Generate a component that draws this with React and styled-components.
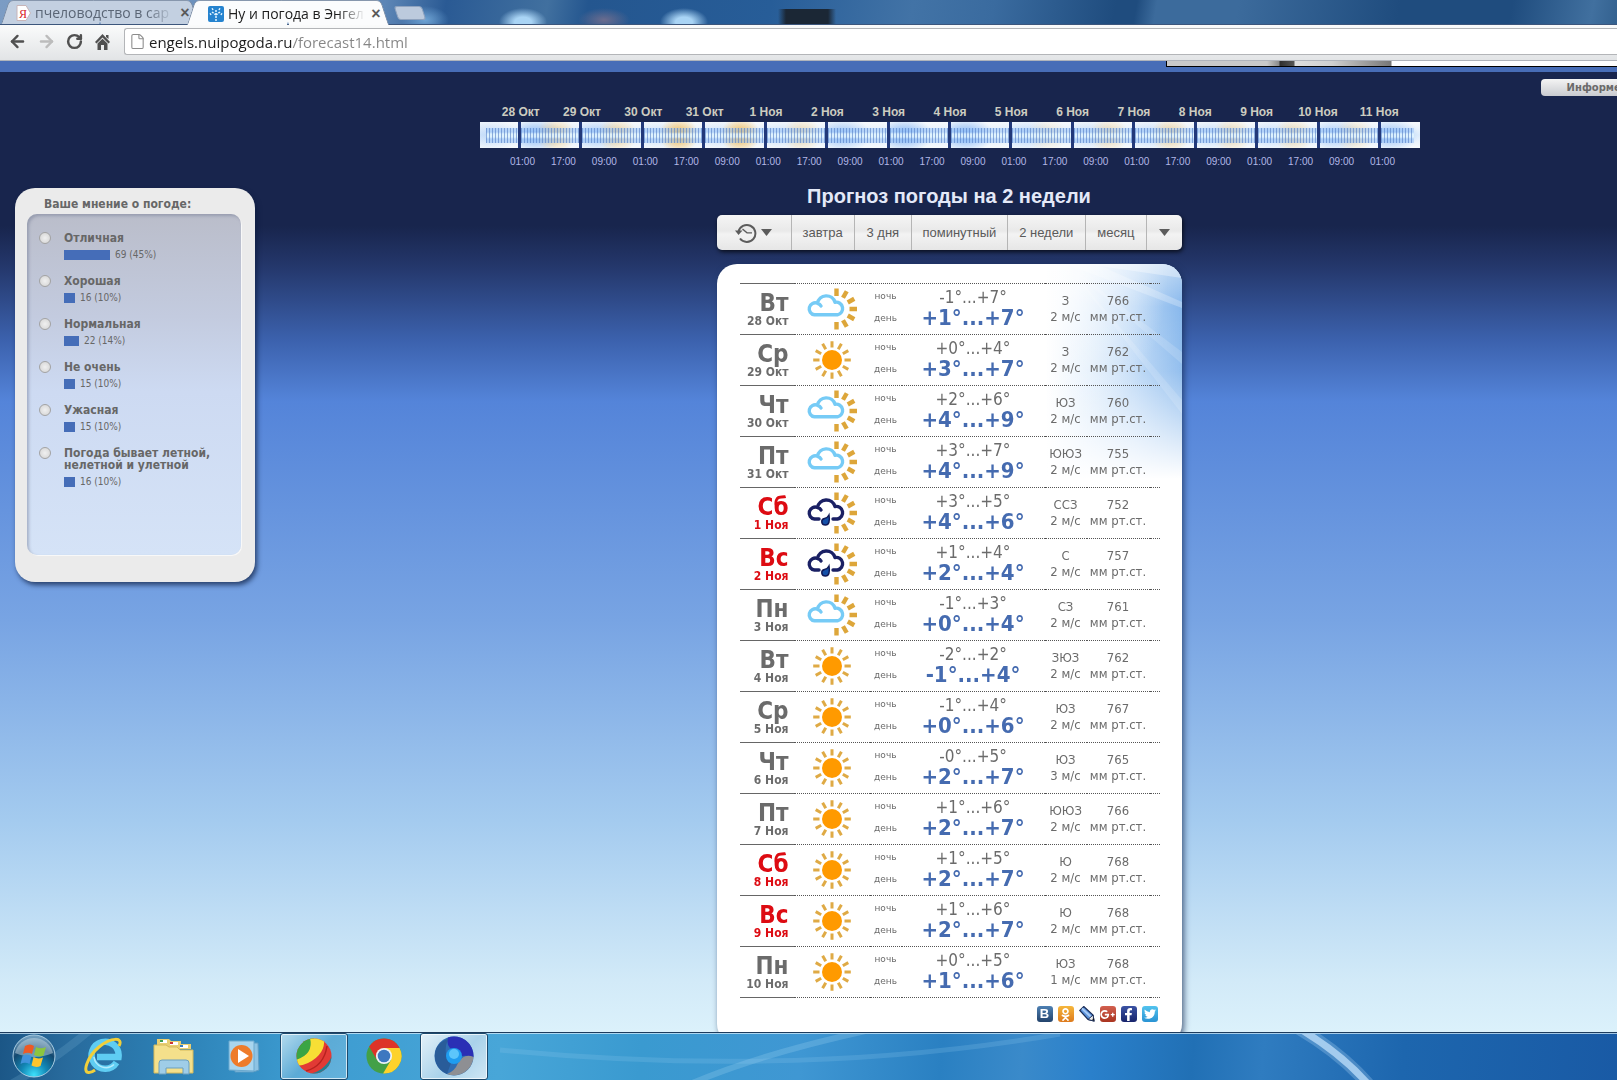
import styled, { createGlobalStyle, css } from "styled-components";
import { FaOdnoklassniki, FaGooglePlusG, FaFacebookF, FaTwitter } from "react-icons/fa";
import { ArrowLeft, ArrowRight, RotateCw, File } from "lucide-react";

const tahoma = `"DejaVu Sans Condensed", "DejaVu Sans", sans-serif`;
const arial = `"Liberation Sans", Arial, sans-serif`;
const segoe = `"Open Sans", "Noto Sans", sans-serif`;

const GlobalStyle = createGlobalStyle`
  * { box-sizing: border-box; }
  body {
    margin: 0;
    overflow: hidden;
    font-family: ${tahoma};
  }
  button, input { font: inherit; }
  svg { display: block; }
`

const Screen = styled.div`
  height: 100vh;
  display: flex;
  flex-direction: column;
`

/* ---------- browser ---------- */

const TabBar = styled.div`
  height: 25px;
  flex-shrink: 0;
  display: flex;
  align-items: flex-end;
  padding-left: 5px;
  border-bottom: 1px solid #3c567c;
  background:
    radial-gradient(ellipse 24px 14px at 523px 22px, #a9d4f5 35%, transparent),
    radial-gradient(ellipse 24px 14px at 425px 20px, #6ea3d4, transparent),
    radial-gradient(ellipse 26px 12px at 604px 20px, #6b6c8e, transparent),
    radial-gradient(ellipse 24px 14px at 684px 22px, #a9d4f5 35%, transparent),
    linear-gradient(90deg, transparent 778px, #1b2735 786px, #1b2735 828px, transparent 836px) 0 9px / 100% 15px no-repeat,
    linear-gradient(100deg, #7b9cc4 0, #5d86b6 380px, #2a5a94 440px, #41709f 540px, #24568f 580px, #275d98 760px, #4273a6 900px, #3a6b9f 980px, #1f4c7e 1100px, #1f4c7e 1120px, #3c6b9c 1140px, #3c6b9c 1220px, #1f4c7e 1380px, #1f4c7e 1490px, #41709f 1570px, #33618f 100%);
`

const Tab = styled.div`
  position: relative;
  z-index: ${({ $active }) => ($active ? 2 : 1)};
  width: ${({ $active }) => ($active ? "194px" : "190px")};
  height: ${({ $active }) => ($active ? "25px" : "24px")};
  margin-right: -4px;
  margin-bottom: ${({ $active }) => ($active ? "-1px" : "0")};
  padding: ${({ $active }) => ($active ? "2px 2px 0 17px" : "2px 3px 0 11px")};
  display: flex;
  align-items: center;
  gap: 4px;
  font: 14px/20px ${segoe};
  color: ${({ $active }) => ($active ? "#1c1c1c" : "#5b6676")};
  &::before, &::after {
    content: "";
    position: absolute;
    z-index: -1;
    top: 0;
    bottom: 0;
    width: 51%;
    background: ${({ $active }) => ($active ? "#fbfcfd" : "#c3d0e1")};
    border-top: 1px solid #8797ad;
  }
  &::before {
    left: 0;
    transform: skewX(-18deg);
    border-left: 1px solid #7587a0;
    border-top-left-radius: 5px;
  }
  &::after {
    right: 0;
    transform: skewX(18deg);
    border-right: 1px solid #7587a0;
    border-top-right-radius: 5px;
  }
  > svg { flex-shrink: 0; }
`

const TabTitle = styled.span`
  flex: 1;
  min-width: 0;
  white-space: nowrap;
  mask-image: linear-gradient(90deg, #000 80%, transparent);
`

const TabClose = styled.button`
  width: 14px;
  flex-shrink: 0;
  padding: 0;
  border: 0;
  background: none;
  color: #5a5a5a;
  font: bold 16px/20px ${arial};
`

const NewTab = styled.button`
  width: 28px;
  height: 14px;
  margin: 0 0 4px 15px;
  padding: 0;
  border: 1px solid #8fa3bf;
  border-radius: 3px;
  background: #bccadd;
  transform: skewX(18deg);
`

const Toolbar = styled.div`
  height: 36px;
  flex-shrink: 0;
  display: flex;
  align-items: center;
  padding: 0 0 2px 8px;
  background: linear-gradient(#fafbfb, #e2e4e6);
  border-bottom: 1px solid #b0b4bb;
`

const ToolButton = styled.button`
  width: 29px;
  height: 26px;
  padding: 0;
  border: 0;
  background: none;
  color: ${({ $dim }) => ($dim ? "#bcbcbc" : "#505050")};
`

const AddressBox = styled.label`
  flex: 1;
  height: 27px;
  display: flex;
  align-items: center;
  gap: 3px;
  padding-left: 4px;
  background: #fff;
  border: 1px solid #b3b5b8;
  border-right: 0;
  border-radius: 3px 0 0 3px;
  color: #8b8b8b;
`

const Address = styled.input`
  flex: 1;
  padding: 0;
  border: 0;
  outline: 0;
  font: 15px/24px ${segoe};
  color: transparent;
  background: linear-gradient(90deg, #1d1d1d 143px, #858585 143px);
  background-clip: text;
`

/* ---------- page ---------- */

const Page = styled.div`
  flex: 1;
  min-height: 0;
  overflow: hidden;
  background: linear-gradient(#18254d 165px, #24376b 205px, #3c62ae 280px, #5484d9 340px, #78a4e3 560px, #a4cbef 760px, #d2eaf8 920px, #dbf1fb 970px);
`

const TopStrip = styled.div`
  height: 11px;
  display: flex;
  justify-content: flex-end;
  background: #476db7;
`

const Banner = styled.div`
  width: 451px;
  height: 6px;
  border: solid #000;
  border-width: 0 0 1px 1px;
  background: linear-gradient(90deg, #c9c9c9 100px, #8a8a8a 112px, #2e2e2e 113px, #555 127px, #dedede 128px, #d0d0d0 165px, #777 224px, #fff 225px);
`

const Columns = styled.div`
  display: flex;
  align-items: flex-start;
`

const Side = styled.aside`
  flex: 0 0 283px;
  padding: 116px 28px 0 15px;
`

const Main = styled.main`
  flex: 1;
  display: flex;
  flex-direction: column;
  align-items: center;
`

const InformerRow = styled.div`
  align-self: stretch;
  display: flex;
  justify-content: flex-end;
  height: 32px;
  padding-top: 7px;
`

const Informer = styled.button`
  height: 17px;
  margin-right: -46px;
  padding: 0 26px;
  border: 0;
  border-radius: 4px;
  background: linear-gradient(#f4f4f4, #c9cbd0);
  color: #6a6a6a;
  font: bold 10px/17px "DejaVu Sans", sans-serif;
`

const Timeline = styled.section`
  width: 940px;
  max-width: 100%;
`

const Days = styled.div`
  display: flex;
  padding: 0 10px;
  font: bold 12px/16px ${arial};
  color: #ccccc0;
  > span {
    flex: 1;
    text-align: center;
  }
`

const Hours = styled.div`
  display: flex;
  margin-top: 6px;
  padding: 0 17px 0 22px;
  font: 10px/16px ${arial};
  color: #b2b7e6;
  > span {
    flex: 1;
    text-align: center;
  }
`

const Segments = styled.div`
  display: grid;
  grid-template-columns: 38px repeat(14, 1fr) 39px;
  gap: 3px;
  height: 26px;
  margin-top: 2px;
  background: #22397a;
`

const Segment = styled.div`
  padding: 6px ${({ $last }) => ($last ? "6px" : "0")} 5px ${({ $first }) => ($first ? "6px" : "0")};
  background:
    radial-gradient(ellipse 20px 18px at 60% 50%, rgba(245, 190, 90, ${({ $warm }) => $warm}) 20%, transparent),
    radial-gradient(ellipse 28px 18px at 25% 50%, rgba(130, 180, 245, ${({ $cold }) => $cold}), transparent),
    linear-gradient(#f7fafd, #dcebfb 50%, #f7fafd);
  &::before {
    content: "";
    display: block;
    height: 100%;
    background:
      repeating-linear-gradient(90deg, rgba(82, 124, 196, 0.6) 0 1px, transparent 1px 3px),
      linear-gradient(rgba(140, 188, 246, 0.45) 0 4px, rgba(225, 245, 255, 0.85) 6px 9px, rgba(140, 188, 246, 0.45) 11px);
  }
`

const ForecastBlock = styled.div`
  align-self: stretch;
  display: flex;
  flex-direction: column;
  align-items: center;
  padding-right: 2px;
`

const Title = styled.h1`
  margin: 14px 0 7px;
  font: bold 20px/24px ${arial};
  color: #e4e9f8;
`

const Nav = styled.nav`
  width: 465px;
  height: 35px;
  display: flex;
  border-radius: 5px;
  background: linear-gradient(#f5f5f5, #e9e9e9 45%, #f3f3f3 55%, #e6e6e6);
  box-shadow: 1px 2px 4px rgba(0, 0, 0, 0.7);
`

const navItem = css`
  flex: ${({ $grow }) => $grow} 1 0;
  display: flex;
  align-items: center;
  justify-content: center;
  gap: 4px;
  padding: 0;
  border: 0;
  background: none;
  color: #5a5a5a;
  font: 13px/16px ${arial};
  text-decoration: none;
`

const NavItem = styled.a`
  ${navItem}
  border-left: 1px solid #b5b5b5;
`

const NavButton = styled.button`
  ${navItem}
  border-left: ${({ $line }) => ($line ? "1px solid #b5b5b5" : "0")};
`

const Card = styled.section`
  position: relative;
  width: 465px;
  margin-top: 14px;
  padding: 19px 22px 22px 23px;
  border-radius: 20px;
  overflow: hidden;
  background: #fff;
`

const CardShadow = styled.div`
  border-radius: 20px;
  filter: drop-shadow(2px 2px 3px rgba(20, 40, 80, 0.7));
`

const Rays = styled.svg`
  position: absolute;
  top: 0;
  right: 0;
`

const Forecast = styled.table`
  position: relative;
  width: 100%;
  table-layout: fixed;
  border-spacing: 0;
  color: #6b6b6b;
  td, th {
    height: 51px;
    padding: 0;
    border-bottom: 1px dotted #555;
    text-align: center;
    vertical-align: middle;
  }
  tr:first-child > * {
    height: 52px;
    border-top: 1px dotted #555;
  }
  tr > th {
    padding-right: 5px;
    border-bottom: 1px solid #666;
    text-align: right;
  }
  tr:first-child > th { border-top: 1px solid #666; }
  td > svg { margin: 0 auto; }
`

const DayRow = styled.tr`
  ${({ $weekend }) => $weekend && css`
    th > * { color: #dd0b12; }
  `}
`

const Weekday = styled.span`
  display: block;
  padding-top: 4px;
  font: bold 24px/20px ${tahoma};
`

const DateText = styled.span`
  display: block;
  font: bold 12px/16px ${tahoma};
`

const PartCell = styled.td`
  && { padding-bottom: 4px; }
`

const TempCell = styled.td`
  && { padding-bottom: 2px; }
`

const Part = styled.span`
  display: block;
  font: 9px/22px "DejaVu Sans", sans-serif;
`

const Night = styled.span`
  display: block;
  font: 17px/20px ${tahoma};
`

const DayTemp = styled.span`
  display: block;
  color: #456bb0;
  font: bold 22px/22px ${tahoma};
`

const Small = styled.span`
  display: block;
  white-space: nowrap;
  font: 13px/16px ${tahoma};
`

const Share = styled.div`
  position: relative;
  display: flex;
  justify-content: flex-end;
  gap: 5px;
  padding: 8px 2px 0 0;
`

const ShareLink = styled.a`
  width: 16px;
  height: 16px;
  display: flex;
  align-items: center;
  justify-content: center;
  border-radius: 3px;
  background: ${({ $bg }) => $bg};
  color: #fff;
  font: bold 13px/16px ${arial};
  text-decoration: none;
`

/* ---------- poll ---------- */

const Poll = styled.form`
  padding: 8px 14px 27px 12px;
  border-radius: 20px;
  background: #ebebeb;
  box-shadow: 2px 3px 5px rgba(10, 25, 60, 0.7);
  color: #676767;
`

const PollTitle = styled.h2`
  margin: 0 0 2px 17px;
  font: bold 12px/16px ${tahoma};
`

const PollBody = styled.div`
  min-height: 341px;
  padding: 18px 12px 0;
  display: flex;
  flex-direction: column;
  gap: 9px;
  border-radius: 10px;
  background: linear-gradient(#babdca, #c3cbdf 30%, #cddaf2 52%, #d5e3f7);
  box-shadow: inset 2px 2px 3px rgba(110, 120, 145, 0.45), 1px 1px 0 #f8f8f8;
`

const Option = styled.div`
  display: flex;
  align-items: flex-start;
  gap: 13px;
  input {
    appearance: none;
    width: 12px;
    height: 12px;
    flex-shrink: 0;
    margin: 0;
    border: 1px solid #a3a3a3;
    border-radius: 50%;
    background: radial-gradient(#f0f0f0, #d2d2d2);
  }
  label {
    display: block;
    font: bold 12px/12px ${tahoma};
  }
`

const Result = styled.div`
  display: flex;
  align-items: center;
  gap: 5px;
  height: 10px;
  margin: 6px 0;
  font: 10px/10px ${tahoma};
  &::before {
    content: "";
    width: ${({ $percent }) => $percent + 1}px;
    height: 10px;
    background: #456db8;
  }
`

/* ---------- taskbar ---------- */

const Taskbar = styled.footer`
  position: relative;
  height: 48px;
  flex-shrink: 0;
  display: flex;
  gap: 2px;
  border-top: 1px solid #1d3b5c;
  background: linear-gradient(95deg, #1b5686 0, #286b9d 70px, #2c80b5 170px, #3c9bd0 300px, #48a6d8 500px, #3a9ad0 640px, #3f97d3 800px, #2a80c2 940px, #3a8aca 1020px, #2a80cb 1090px, #2170b5 1190px, #2f7cc0 1260px, #1d66ae 1400px, #195aa5 100%);
  box-shadow: inset 0 1px 0 rgba(210, 235, 250, 0.75);
`

const Swoosh = styled.svg`
  position: absolute;
  inset: 1px 0 0;
  pointer-events: none;
`

const TaskButton = styled.button`
  position: relative;
  width: 68px;
  padding: 0 0 2px;
  display: flex;
  align-items: center;
  justify-content: center;
  border: 1px solid transparent;
  background: none;
  ${({ $state }) => $state && css`
    border-color: #1c4a6d;
    border-radius: 3px;
    box-shadow: inset 0 0 0 1px rgba(255, 255, 255, 0.7);
    background: ${$state === "active"
      ? "linear-gradient(135deg, #e3f1f9, #a9d2ea 55%, #cfe7f4)"
      : "linear-gradient(135deg, #b4dbee, #5cabd6 50%, #64b3dd)"};
  `}
`

const days = ["28 Окт", "29 Окт", "30 Окт", "31 Окт", "1 Ноя", "2 Ноя", "3 Ноя", "4 Ноя", "5 Ноя", "6 Ноя", "7 Ноя", "8 Ноя", "9 Ноя", "10 Ноя", "11 Ноя"];
const hours = Array.from({ length: 22 }, (_, i) => ["01:00", "17:00", "09:00"][i % 3]);

// [warm, cold] tint of every stretch of the timeline
const tints = [[0, 0.3], [0.5, 0.9], [0.5, 0.6], [0.9, 0.2], [0.9, 0.2], [0.4, 0.2], [0, 0.7], [0, 0.95], [0, 0.95], [0.2, 0.4], [0.4, 0.3], [0.5, 0.3], [0.4, 0.3], [0.4, 0.3], [0.3, 0.6], [0, 0.7]];

const forecast = [
  ["Вт", "28 Окт", "cloud", "-1°...+7°", "+1°...+7°", "З", 2, 766],
  ["Ср", "29 Окт", "sun", "+0°...+4°", "+3°...+7°", "З", 2, 762],
  ["Чт", "30 Окт", "cloud", "+2°...+6°", "+4°...+9°", "ЮЗ", 2, 760],
  ["Пт", "31 Окт", "cloud", "+3°...+7°", "+4°...+9°", "ЮЮЗ", 2, 755],
  ["Сб", "1 Ноя", "rain", "+3°...+5°", "+4°...+6°", "ССЗ", 2, 752],
  ["Вс", "2 Ноя", "rain", "+1°...+4°", "+2°...+4°", "С", 2, 757],
  ["Пн", "3 Ноя", "cloud", "-1°...+3°", "+0°...+4°", "СЗ", 2, 761],
  ["Вт", "4 Ноя", "sun", "-2°...+2°", "-1°...+4°", "ЗЮЗ", 2, 762],
  ["Ср", "5 Ноя", "sun", "-1°...+4°", "+0°...+6°", "ЮЗ", 2, 767],
  ["Чт", "6 Ноя", "sun", "-0°...+5°", "+2°...+7°", "ЮЗ", 3, 765],
  ["Пт", "7 Ноя", "sun", "+1°...+6°", "+2°...+7°", "ЮЮЗ", 2, 766],
  ["Сб", "8 Ноя", "sun", "+1°...+5°", "+2°...+7°", "Ю", 2, 768],
  ["Вс", "9 Ноя", "sun", "+1°...+6°", "+2°...+7°", "Ю", 2, 768],
  ["Пн", "10 Ноя", "sun", "+0°...+5°", "+1°...+6°", "ЮЗ", 1, 768],
];

const poll = [
  ["Отличная", 69, 45],
  ["Хорошая", 16, 10],
  ["Нормальная", 22, 14],
  ["Не очень", 15, 10],
  ["Ужасная", 15, 10],
  ["Погода бывает летной, нелетной и улетной", 16, 10],
];

const SunIcon = () => (
  <svg width="38" height="38" viewBox="-19 -19 38 38">
    {Array.from({ length: 12 }, (_, i) => (
      <path key={i} d="M0 -12.5V-18.8" stroke="#dfaa45" strokeWidth="3" transform={`rotate(${i * 30})`} />
    ))}
    <circle r="10" fill="#ff9a00" />
  </svg>
);

const CloudIcon = ({ rain }) => (
  <svg width="52" height="44" viewBox="0 0 52 44" fill="none">
    {Array.from({ length: 7 }, (_, i) => (
      <path key={i} d="M0 -13V-20.5" stroke="#dda63a" strokeWidth="4.4" transform={`translate(30.5 22) rotate(${i * 30})`} />
    ))}
    <path
      d={rain
        ? "M13 28H8.5A6 6 0 1 1 11.5 16.5A9 9 0 0 1 29 15.5A6.3 6.3 0 0 1 31.5 28H27M11.5 16.5Q14 17 15 19"
        : "M8.5 27.8A6 6 0 1 1 11.5 16.3A9 9 0 0 1 29 15.3A6.3 6.3 0 0 1 31.5 27.8ZM11.5 16.3Q14 17 15 19"}
      fill="#fff"
      stroke={rain ? "#1a2064" : "#76cbf6"}
      strokeWidth="3.4"
      strokeLinecap="round"
      strokeLinejoin="round"
    />
    {rain && <path d="M23 24C24 30 23 34 19.5 34C15 34 14.500 28.500 18.500 27.500C21 27 22 26 23 24Z" fill="#1550a8" stroke="#101a58" strokeWidth="1.5" />}
  </svg>
);

const weatherIcons = {
  sun: <SunIcon />,
  cloud: <CloudIcon />,
  rain: <CloudIcon rain />,
};

const Arrow = () => (
  <svg width="11" height="7" viewBox="0 0 11 7"><path d="M0 0H11L5.5 7Z" fill="#5c5c5c" /></svg>
);

const HistoryIcon = () => (
  <svg width="22" height="20" viewBox="0 0 22 20" fill="none" stroke="#5c5c5c">
    <path d="M3.500 9A8.500 8.500 0 1 1 5 15.500" strokeWidth="2" />
    <path d="M0 7.500H7.500L3.500 12Z" fill="#5c5c5c" stroke="none" />
    <path d="M7.500 6L12 9.800H17" strokeWidth="1.300" />
  </svg>
);

const Browser = () => (
  <>
    <TabBar>
      <Tab>
        <svg width="15" height="16" viewBox="0 0 15 16">
          <path d="M1 .5H10L14.500 8L10 15.500H1Z" fill="#fff" stroke="#c7b5b8" />
          <text x="3" y="12.500" fontSize="12" fontFamily="Liberation Serif" fill="#d8232a">Я</text>
        </svg>
        <TabTitle>пчеловодство в сар</TabTitle>
        <TabClose aria-label="Закрыть">×</TabClose>
      </Tab>
      <Tab $active>
        <svg width="16" height="16" viewBox="0 0 16 16">
          <rect width="16" height="16" rx="2" fill="#2583cf" />
          <path d="M8 15V7M8 9L4 6M8 9L12 6M8 6V3M3 9L2 7M13 9L14 7M5 4L4 2M11 4L12 2" stroke="#e2f4ff" strokeWidth="1.500" strokeDasharray="2 1" />
        </svg>
        <TabTitle>Ну и погода в Энгел</TabTitle>
        <TabClose aria-label="Закрыть">×</TabClose>
      </Tab>
      <NewTab aria-label="Новая вкладка" />
    </TabBar>
    <Toolbar>
      <ToolButton aria-label="Назад"><ArrowLeft size={19} strokeWidth={3} /></ToolButton>
      <ToolButton $dim aria-label="Вперёд"><ArrowRight size={19} strokeWidth={3} /></ToolButton>
      <ToolButton aria-label="Обновить"><RotateCw size={17} strokeWidth={3.5} /></ToolButton>
      <ToolButton aria-label="Домой">
        <svg width="15" height="16" viewBox="0 0 15 16" fill="#505050">
          <path d="M7.500 0L15 8L13.500 9.500L7.500 3.500L1.500 9.500L0 8ZM11 1H13.500V5L11 3ZM2.500 9.500L7.500 4.800L12.500 9.500V16H9V11H6V16H2.500Z" />
        </svg>
      </ToolButton>
      <AddressBox>
        <File size={17} strokeWidth={1.500} />
        <Address aria-label="Адрес" defaultValue="engels.nuipogoda.ru/forecast14.html" />
      </AddressBox>
    </Toolbar>
  </>
);

const PollPanel = () => (
  <Poll>
    <PollTitle>Ваше мнение о погоде:</PollTitle>
    <PollBody>
      {poll.map(([name, votes, percent], i) => (
        <Option key={name}>
          <input type="radio" name="opinion" id={`opinion${i}`} />
          <div>
            <label htmlFor={`opinion${i}`}>{name}</label>
            <Result $percent={percent}>{votes} ({percent}%)</Result>
          </div>
        </Option>
      ))}
    </PollBody>
  </Poll>
);

const TimelineBar = () => (
  <Timeline>
    <Days>{days.map((d) => <span key={d}>{d}</span>)}</Days>
    <Segments>
      {tints.map(([warm, cold], i) => (
        <Segment key={i} $warm={warm} $cold={cold} $first={i === 0} $last={i === tints.length - 1} />
      ))}
    </Segments>
    <Hours>{hours.map((h, i) => <span key={i}>{h}</span>)}</Hours>
  </Timeline>
);

const SkyRays = () => (
  <Rays width="136" height="215" viewBox="0 0 136 215">
    <defs>
      <linearGradient id="sky">
        <stop offset="0" stopColor="#fff" />
        <stop offset="0.25" stopColor="#e4f0fc" />
        <stop offset="0.65" stopColor="#bcd8f6" />
        <stop offset="1" stopColor="#88b8ec" />
      </linearGradient>
      <linearGradient id="fade" x2="0" y2="1">
        <stop offset="0" stopColor="#fff" stopOpacity="0.4" />
        <stop offset="0.2" stopColor="#fff" stopOpacity="0" />
        <stop offset="0.5" stopColor="#fff" stopOpacity="0.1" />
        <stop offset="1" stopColor="#fff" />
      </linearGradient>
      <radialGradient id="flare" cx="0.1" cy="0" r="0.8">
        <stop offset="0.2" stopColor="#fff" />
        <stop offset="1" stopColor="#fff" stopOpacity="0" />
      </radialGradient>
    </defs>
    <rect width="136" height="215" fill="url(#sky)" />
    <g fill="#fff">
      <path d="M20 0L136 44V38L50 0Z" opacity="0.25" />
      <path d="M40 0L136 14V0Z" opacity="0.35" />
      <path d="M20 0L136 100V88Z" opacity="0.15" />
      <path d="M20 0L136 150V136Z" opacity="0.15" />
    </g>
    <rect width="136" height="215" fill="url(#flare)" opacity="0.7" />
    <rect width="136" height="215" fill="url(#fade)" />
  </Rays>
);

const ForecastCard = () => (
  <CardShadow>
    <Card>
      <SkyRays />
      <Forecast>
        <colgroup>
          <col width="54" />
          <col width="76" />
          <col width="32" />
          <col width="143" />
          <col width="42" />
          <col width="63" />
          <col width="10" />
        </colgroup>
        <tbody>
          {forecast.map(([name, date, icon, night, day, wind, speed, pressure]) => (
            <DayRow key={date} $weekend={name === "Сб" || name === "Вс"}>
              <th scope="row"><Weekday>{name}</Weekday><DateText>{date}</DateText></th>
              <td>{weatherIcons[icon]}</td>
              <PartCell><Part>ночь</Part><Part>день</Part></PartCell>
              <TempCell><Night>{night}</Night><DayTemp>{day}</DayTemp></TempCell>
              <td><Small>{wind}</Small><Small>{speed} м/с</Small></td>
              <td><Small>{pressure}</Small><Small>мм рт.ст.</Small></td>
              <td />
            </DayRow>
          ))}
        </tbody>
      </Forecast>
      <Share>
        <ShareLink href="#vk" $bg="linear-gradient(#4d80b3, #23436b)" aria-label="ВКонтакте">B</ShareLink>
        <ShareLink href="#ok" $bg="linear-gradient(#f6b73c, #dd7a1d)" aria-label="Одноклассники"><FaOdnoklassniki size={13} /></ShareLink>
        <ShareLink href="#lj" $bg="none" aria-label="LiveJournal">
          <svg width="16" height="16" viewBox="0 0 16 16">
            <path d="M0.800 4.500L4.800 .5L14 9L15 15L9 13.500Z" fill="#5b93dc" stroke="#1b2d57" strokeWidth="1.200" />
            <path d="M3 2.500L12 11" stroke="#a9cbf5" strokeWidth="2" />
            <path d="M9 13.500L14 9L15 15Z" fill="#eee" stroke="#1b2d57" />
            <path d="M13 13L15 15L14.800 12.500Z" fill="#111" />
          </svg>
        </ShareLink>
        <ShareLink href="#gplus" $bg="linear-gradient(#d2604f, #a93420)" aria-label="Google+"><FaGooglePlusG size={15} /></ShareLink>
        <ShareLink href="#fb" $bg="linear-gradient(#3b53a4, #17246c)" aria-label="Facebook"><FaFacebookF size={13} /></ShareLink>
        <ShareLink href="#tw" $bg="linear-gradient(#52c3ee, #2a93d3)" aria-label="Twitter"><FaTwitter size={12} /></ShareLink>
      </Share>
    </Card>
  </CardShadow>
);

const StartOrb = () => (
  <svg width="44" height="44" viewBox="0 0 44 44">
    <defs>
      <radialGradient id="orb" cx="0.5" cy="0.95" r="0.9">
        <stop offset="0" stopColor="#3de0fb" />
        <stop offset="0.35" stopColor="#1287b5" />
        <stop offset="0.7" stopColor="#14486f" />
        <stop offset="1" stopColor="#6f9dbd" />
      </radialGradient>
    </defs>
    <circle cx="22" cy="22" r="21" fill="url(#orb)" stroke="#a8cce2" />
    <path d="M3 19A19.500 19.500 0 0 1 41 19Q22 27 3 19Z" fill="#d5e4ee" opacity="0.45" />
    <path d="M13 12Q18 9 22 12L20 20Q16 17.500 11 20Z" fill="#ee5a24" />
    <path d="M24 13Q29 15.500 34 13L31.500 21.500Q27 23.500 22 21Z" fill="#8cc63e" />
    <path d="M10.500 22Q15 19.500 19.500 22L17.500 30Q13 27.500 8.500 30Z" fill="#3f93dc" />
    <path d="M21.500 23Q26 25.500 31 23.500L28.500 32Q24 34 19.500 31.500Z" fill="#fdc52d" />
  </svg>
);

const ExplorerIcon = () => (
  <svg width="40" height="38" viewBox="0 0 40 38" fill="none">
    <path d="M32.500 25.500A13.500 13.500 0 1 1 34.500 20H13" stroke="#5fcdf3" strokeWidth="6.500" />
    <path d="M30 27.500A12 12 0 0 1 10 20" stroke="#b4ecfd" strokeWidth="1.500" />
    <path d="M35 9C40 0 27 0 15 10C3 20 -2 36 5 35.500C7 35.500 9 34.500 11 33" stroke="#f1cf3a" strokeWidth="3" />
  </svg>
);

const FolderIcon = () => (
  <svg width="42" height="38" viewBox="0 0 42 38">
    <path d="M4 2H16L18 4H28V7H38V12H4Z" fill="#e9cf72" />
    <path d="M7 3H14V6H7ZM17 5H25V8H17ZM27 8H35V11H27Z" fill="#fff" />
    <path d="M7 3H10V5H7Z" fill="#3b9e4f" />
    <path d="M17 5H20V7H17Z" fill="#c33" />
    <path d="M27 8H30V10H27Z" fill="#357fc4" />
    <path d="M1 8H13L16 10H24L27 13H40V36H1Z" fill="#f4e08b" stroke="#d5b95b" />
    <path d="M6 37V26Q6 23 9 23H33Q36 23 36 26V37H30V31H13V37Z" fill="#9fcde8" stroke="#6a9fbf" />
  </svg>
);

const PlayerIcon = () => (
  <svg width="34" height="34" viewBox="0 0 34 34">
    <path d="M8 4H31L32 31L26 33H8Z" fill="#8ec3e3" stroke="#5d9cc4" />
    <path d="M2 2H27V32L2 31Z" fill="#a9d5ee" stroke="#6aa9cf" />
    <circle cx="14.500" cy="17" r="11" fill="#ee7b2a" />
    <path d="M11 10L22 17L11 24Z" fill="#fff" />
  </svg>
);

const BallIcon = () => (
  <svg width="36" height="36" viewBox="0 0 36 36">
    <clipPath id="ball"><circle cx="18" cy="18" r="17.500" /></clipPath>
    <g clipPath="url(#ball)">
      <rect width="36" height="36" fill="#e23a35" />
      <path d="M0 0H18Q18 14 0 24Z" fill="#3aa544" />
      <path d="M14 0H28Q30 16 12 25Q6 28 0 28V22Q18 16 14 0Z" fill="#f7df35" />
      <path d="M36 18V36H12Q28 34 36 18Z" fill="#227f92" />
      <path d="M10 33Q28 28 31 8" fill="none" stroke="#b7221f" strokeWidth="1.500" />
    </g>
  </svg>
);

const ChromeIcon = () => (
  <svg width="36" height="36" viewBox="0 0 40 40">
    <circle cx="20" cy="20" r="19.500" fill="#43a047" />
    <path d="M20 11H37.300A19.500 19.500 0 0 1 19 39.500L27.800 24.500Z" fill="#fdd22b" />
    <path d="M20 11H37.300A19.500 19.500 0 0 0 3.500 9.500L12.200 24.500Z" fill="#dd3328" />
    <circle cx="20" cy="20" r="9" fill="#eef3f8" />
    <circle cx="20" cy="20" r="7" fill="#3d78c0" />
  </svg>
);

const ChromiumIcon = () => (
  <svg width="40" height="40" viewBox="0 0 40 40">
    <circle cx="20" cy="20" r="19.500" fill="#2f6db3" />
    <path d="M14 1.500A19.500 19.500 0 0 1 39.500 21Q34 19 27 20L16 12Q12 7 14 1.500Z" fill="#2a2fb5" />
    <path d="M39.500 21A19.500 19.500 0 0 1 13 38Q21 35 24 27Q30 17 39.500 21Z" fill="#8e8f93" />
    <path d="M3 11A19.500 19.500 0 0 0 13 38L17 27Q8 18 14 3Q7 5 3 11Z" fill="#295c99" />
    <circle cx="20" cy="20" r="8" fill="#1f9df0" />
    <circle cx="20" cy="18" r="5" fill="#5cc6fb" />
  </svg>
);

const App = () => (
  <Screen>
    <GlobalStyle />
    <Browser />
    <Page>
      <TopStrip><Banner /></TopStrip>
      <Columns>
        <Side><PollPanel /></Side>
        <Main>
          <InformerRow><Informer>Информеры</Informer></InformerRow>
          <TimelineBar />
          <ForecastBlock>
            <Title>Прогноз погоды на 2 недели</Title>
            <Nav>
              <NavButton $grow={75} aria-label="История"><HistoryIcon /><Arrow /></NavButton>
              <NavItem href="#tomorrow" $grow={63}>завтра</NavItem>
              <NavItem href="#3days" $grow={57}>3 дня</NavItem>
              <NavItem href="#minutes" $grow={96}>поминутный</NavItem>
              <NavItem href="#2weeks" $grow={78}>2 недели</NavItem>
              <NavItem href="#month" $grow={61}>месяц</NavItem>
              <NavButton $grow={35} $line aria-label="Ещё"><Arrow /></NavButton>
            </Nav>
            <ForecastCard />
          </ForecastBlock>
        </Main>
      </Columns>
    </Page>
    <Taskbar>
      <Swoosh width="100%" height="46">
        <path d="M1295 -8Q1340 18 1368 50" fill="none" stroke="#a9d0f3" strokeWidth="13" opacity="0.3" />
        <path d="M1295 -8Q1340 18 1368 50" fill="none" stroke="#b9dbf8" strokeWidth="7" opacity="0.8" />
        <path d="M500 16Q800 45 1060 0" fill="none" stroke="#8cc8ec" strokeWidth="5" opacity="0.22" />
        <path d="M690 50Q760 20 870 -4" fill="none" stroke="#a3d6f2" strokeWidth="6" opacity="0.25" />
        <path d="M0 56Q50 30 90 -4" fill="none" stroke="#a3d6f2" strokeWidth="8" opacity="0.15" />
      </Swoosh>
      <TaskButton aria-label="Пуск"><StartOrb /></TaskButton>
      <TaskButton aria-label="Internet Explorer"><ExplorerIcon /></TaskButton>
      <TaskButton aria-label="Проводник"><FolderIcon /></TaskButton>
      <TaskButton aria-label="Проигрыватель"><PlayerIcon /></TaskButton>
      <TaskButton $state="open" aria-label="Игра"><BallIcon /></TaskButton>
      <TaskButton aria-label="Chrome"><ChromeIcon /></TaskButton>
      <TaskButton $state="active" aria-label="Chromium"><ChromiumIcon /></TaskButton>
    </Taskbar>
  </Screen>
);

export default App;
